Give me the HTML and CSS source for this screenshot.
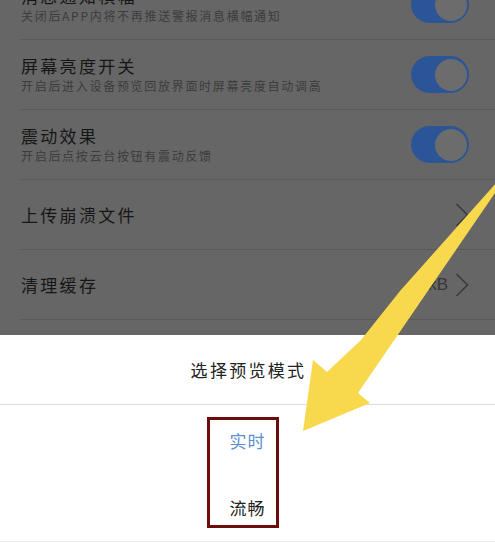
FILE: index.html
```html
<!DOCTYPE html>
<html lang="zh-CN">
<head>
<meta charset="utf-8">
<link rel="stylesheet" href="styles.css">
</head>
<body>
<div class="page">
  <div class="backdrop">
    <div class="list">
      <div class="row">
        <div class="text">
          <div class="title">消息通知横幅</div>
          <div class="sub">关闭后APP内将不再推送警报消息横幅通知</div>
        </div>
        <div class="toggle"><div class="knob"></div></div>
      </div>
      <div class="row">
        <div class="text">
          <div class="title">屏幕亮度开关</div>
          <div class="sub">开启后进入设备预览回放界面时屏幕亮度自动调高</div>
        </div>
        <div class="toggle"><div class="knob"></div></div>
      </div>
      <div class="row">
        <div class="text">
          <div class="title">震动效果</div>
          <div class="sub">开启后点按云台按钮有震动反馈</div>
        </div>
        <div class="toggle"><div class="knob"></div></div>
      </div>
      <div class="row link">
        <div class="title">上传崩溃文件</div>
        <div class="right">
          <svg class="chev" width="14" height="24" viewBox="0 0 14 24"><polyline points="1.5,1 12.5,12 1.5,23" fill="none" stroke="#3a3a3a" stroke-width="1.6"/></svg>
        </div>
      </div>
      <div class="row link">
        <div class="title">清理缓存</div>
        <div class="right">
          <span class="size">0kB</span>
          <svg class="chev" width="14" height="24" viewBox="0 0 14 24"><polyline points="1.5,1 12.5,12 1.5,23" fill="none" stroke="#3a3a3a" stroke-width="1.6"/></svg>
        </div>
      </div>
    </div>
  </div>
  <div class="sheet">
    <div class="sheet-title">选择预览模式</div>
    <div class="options">
      <div class="option active">实时</div>
      <div class="option">流畅</div>
    </div>
  </div>
  <div class="highlight"></div>
  <svg class="arrow" width="495" height="543" viewBox="0 0 495 543">
    <polygon points="497,182 400,291 361,340 327,372 313,360 303,431 370,403 358,393 497,190" fill="#f8d84c"/>
  </svg>
</div>
</body>
</html>
```
FILE: styles.css
```css
* { box-sizing: border-box; }
html, body {
  margin: 0;
  padding: 0;
  background: #ffffff;
}
.page {
  position: relative;
  width: 495px;
  height: 543px;
  overflow: hidden;
  font-family: "Noto Sans CJK SC", "Noto Sans", sans-serif;
}
.backdrop {
  height: 335px;
  background: #666666;
  overflow: hidden;
}
.list {
  margin-top: -30px;
}
.row {
  height: 70px;
  margin-left: 21px;
  padding-right: 26px;
  border-bottom: 1px solid #5a5a5a;
  display: flex;
  align-items: center;
  justify-content: space-between;
}
.text {
  display: flex;
  flex-direction: column;
}
.title {
  font-size: 17px;
  line-height: 22px;
  letter-spacing: 2.3px;
  color: #161616;
}
.sub {
  font-size: 12px;
  line-height: 18px;
  letter-spacing: 1.7px;
  color: #3c3c3c;
}
.toggle {
  width: 58px;
  height: 37px;
  border-radius: 19px;
  background: #2c5597;
  display: flex;
  align-items: center;
  justify-content: flex-end;
  padding-right: 2px;
}
.knob {
  width: 32px;
  height: 32px;
  border-radius: 50%;
  background: #6c6c6c;
}
.link {
  padding-right: 26px;
}
.right {
  display: flex;
  align-items: center;
  gap: 7px;
}
.size {
  font-family: "Liberation Sans", Arial, sans-serif;
  font-size: 17px;
  color: #383838;
}
.chev {
  display: block;
}
.sheet {
  background: #ffffff;
}
.sheet-title {
  height: 70px;
  border-bottom: 1px solid #dcdcdc;
  display: flex;
  align-items: center;
  justify-content: center;
  font-size: 17px;
  letter-spacing: 2.3px;
  padding-left: 2px;
  color: #222222;
}
.options {
  padding-top: 1px;
}
.option {
  height: 68px;
  display: flex;
  align-items: center;
  justify-content: center;
  font-size: 17px;
  letter-spacing: 1px;
  color: #222222;
}
.option:last-child {
  border-bottom: 1px solid #ececec;
}
.option.active {
  color: #5b8fd0;
}
.highlight {
  position: absolute;
  left: 207px;
  top: 417px;
  width: 72px;
  height: 111px;
  border: 3px solid #6e0b0b;
}
.arrow {
  position: absolute;
  left: 0;
  top: 0;
  pointer-events: none;
}
```
